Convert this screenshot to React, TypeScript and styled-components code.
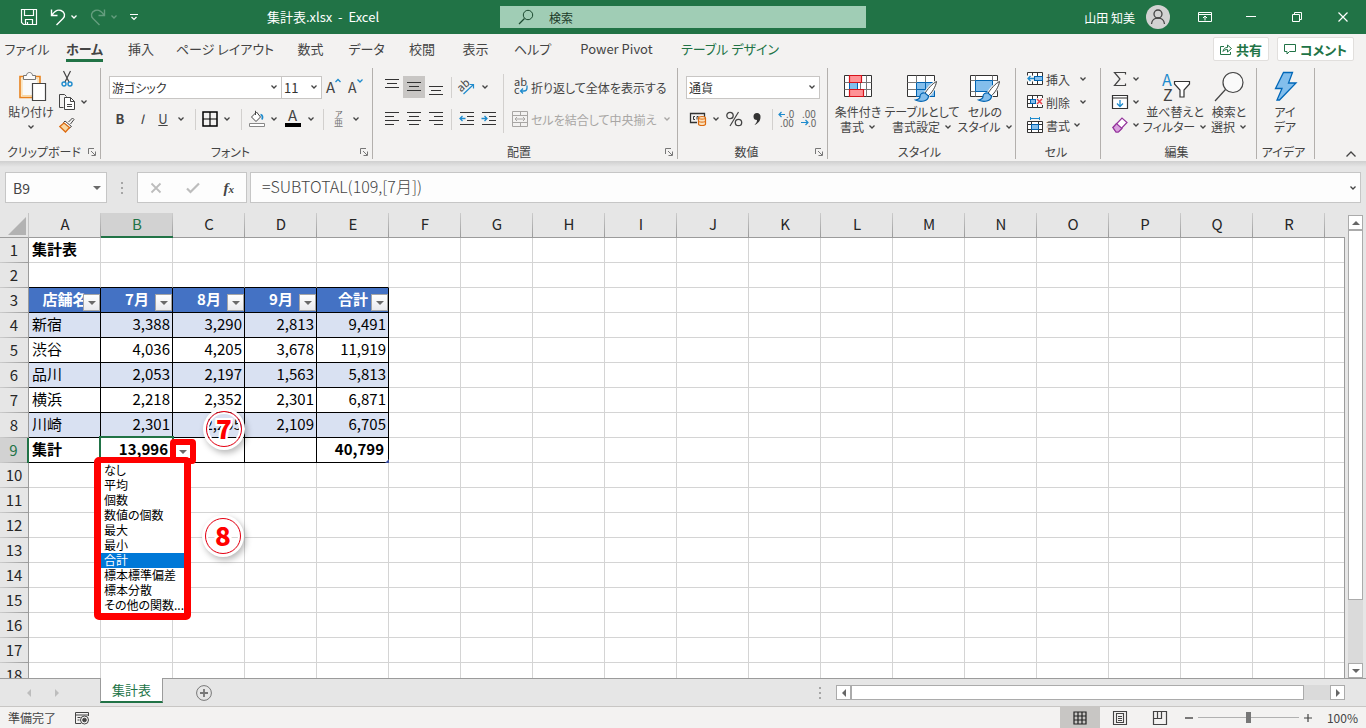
import React, { useEffect, useState } from "react";
import styled, { createGlobalStyle, css } from "styled-components";

const GREEN = "#217346";
const INK = "#444444";
const BLUE = "#1e8bcd";
const EDGE = "#9b9b9b";

const GlobalStyle = createGlobalStyle`
  * { box-sizing: border-box; }
  body { margin: 0; }
  body, button, input, select {
    font-family: "Noto Sans CJK JP", "Noto Sans", sans-serif;
    font-size: 12px;
    color: ${INK};
    font-feature-settings: "palt";
  }
  button, input, select { border: 0; padding: 0; margin: 0; background: transparent; border-radius: 0; outline: 0; }
  svg { display: block; flex: none; overflow: visible; }
`;

const Window = styled.div`
  display: flex;
  flex-direction: column;
  height: 100vh;
  overflow: hidden;
  background: #e6e6e6;
`;

/* ---------- title bar ---------- */

const TitleBar = styled.header`
  display: grid;
  grid-template-columns: 1fr minmax(0, 366px) 1fr;
  align-items: center;
  flex: none;
  height: 34px;
  background: ${GREEN};
  color: #fff;
`;

const TitleSide = styled.div`
  display: flex;
  align-items: center;
  height: 34px;
`;

const QuickAccess = styled.div`
  display: flex;
  align-items: center;
  gap: 4px;
  padding-left: 20px;
`;

const QuickButton = styled.button<{ $faded?: boolean }>`
  display: flex;
  align-items: center;
  gap: 4px;
  height: 24px;
  margin-right: 8px;
  color: #fff;
  opacity: ${(p) => (p.$faded ? 0.3 : 1)};
`;

const DocTitle = styled.h1`
  flex: 1;
  margin: 0;
  font-size: 13px;
  font-weight: 400;
  line-height: 30px;
  text-align: center;
  white-space: pre;
`;

const SearchBox = styled.label`
  display: flex;
  align-items: center;
  gap: 16px;
  height: 22px;
  padding-left: 19px;
  background: #a0cdb5;
  color: #1c4a30;
  input { flex: 1; min-width: 0; height: 22px; color: #1c3a28; }
  input::placeholder { color: #1c3a28; opacity: 1; }
`;

const UserArea = styled.button`
  display: flex;
  align-items: center;
  gap: 11px;
  margin-left: auto;
  margin-right: 12px;
  color: #fff;
  font-size: 12px;
`;

const WindowButton = styled.button`
  display: flex;
  align-items: center;
  justify-content: center;
  width: 46px;
  height: 34px;
  color: #fff;
`;

/* ---------- ribbon tabs ---------- */

const TabStrip = styled.nav`
  display: flex;
  align-items: center;
  flex: none;
  height: 30px;
  background: #f3f2f1;
  padding-right: 12px;
`;

const Tab = styled.button<{ $w: number; $active?: boolean; $context?: boolean }>`
  display: flex;
  align-items: flex-start;
  justify-content: center;
  width: ${(p) => p.$w}px;
  height: 30px;
  padding-top: 4px;
  font-size: 13px;
  white-space: nowrap;
  color: ${(p) => (p.$context ? GREEN : INK)};
  font-weight: ${(p) => (p.$active ? 700 : 400)};
  span {
    line-height: 21px;
    border-bottom: 3px solid ${(p) => (p.$active ? GREEN : "transparent")};
  }
`;

const ShareGroup = styled.div`
  display: flex;
  gap: 8px;
  margin-left: auto;
`;

const ShareButton = styled.button`
  display: flex;
  align-items: center;
  gap: 4px;
  height: 24px;
  padding: 0 6px;
  background: #fff;
  border: 1px solid #e1dfdd;
  border-radius: 2px;
  color: ${GREEN};
  font-size: 13px;
  font-weight: 700;
  white-space: nowrap;
`;

/* ---------- ribbon ---------- */

const Ribbon = styled.section`
  display: flex;
  flex: none;
  padding: 4px 8px 2px 0;
  background: #f3f2f1;
`;

const RibbonShadow = styled.div`
  flex: none;
  height: 11px;
  background: linear-gradient(#cfcfcf, #e6e6e6 6px);
`;

const Group = styled.section<{ $w: number }>`
  display: flex;
  flex-direction: column;
  flex: none;
  width: ${(p) => p.$w}px;
  height: 91px;
  border-right: 1px solid #b3b0ad;
`;

const GroupBody = styled.div<{ $pad?: number }>`
  display: flex;
  height: 77px;
  padding-left: ${(p) => p.$pad ?? 8}px;
`;

const GroupFoot = styled.footer`
  display: flex;
  align-items: center;
  height: 14px;
  padding-right: 4px;
  white-space: nowrap;
  h2 { flex: 1; margin: 0; font-size: 12px; font-weight: 400; line-height: 14px; text-align: center; }
`;

const ToolRows = styled.div`
  display: flex;
  flex-direction: column;
  gap: 10px;
  padding-top: 8px;
`;

const ToolRow = styled.div`
  display: flex;
  align-items: center;
  height: 22px;
`;

const Tool = styled.button<{ $w?: number; $on?: boolean }>`
  display: flex;
  align-items: center;
  justify-content: center;
  flex: none;
  width: ${(p) => p.$w ?? 22}px;
  height: 22px;
  font-size: 13px;
  line-height: 20px;
  background: ${(p) => (p.$on ? "#c8c6c4" : "transparent")};
`;

const ToolDivider = styled.i<{ $w?: number }>`
  display: flex;
  justify-content: center;
  flex: none;
  width: ${(p) => p.$w ?? 12}px;
  &::before { content: ""; width: 1px; height: 21px; background: #d2d0ce; }
`;

const TallDivider = styled.i`
  flex: none;
  width: 1px;
  height: 59px;
  margin: 6px 8px 0 4px;
  background: #d2d0ce;
`;

const SelectBox = styled.span<{ $w: number }>`
  display: grid;
  align-items: center;
  flex: none;
  width: ${(p) => p.$w}px;
  height: 23px;
  background: #fff;
  border: 1px solid #c8c6c4;
  & > * { grid-area: 1 / 1; }
  & > svg { justify-self: end; margin-right: 3px; pointer-events: none; }
  & + & { margin-left: -1px; }
  select { appearance: none; height: 21px; padding-left: 2px; font-size: 12px; color: #333; }
`;

const SizeSelect = styled(SelectBox)`
  select { font-size: 13px; }
`;

const StackColumn = styled.div`
  display: flex;
  flex-direction: column;
  align-items: flex-start;
  gap: 1px;
`;

const SmallButton = styled.button<{ $gap?: number; $w?: number }>`
  display: flex;
  align-items: center;
  gap: ${(p) => p.$gap ?? 3}px;
  width: ${(p) => (p.$w ? `${p.$w}px` : "auto")};
  height: 22px;
  font-size: 12px;
  white-space: nowrap;
  &:disabled { color: #a8a6a4; }
  & > svg:last-child:not(:first-child) { margin-left: auto; }
`;

const WideButton = styled(SmallButton)`
  width: 157px;
  & > svg:last-child:not(:first-child) { margin-left: 4px; }
`;

const BigButton = styled.button<{ $w: number }>`
  display: flex;
  flex-direction: column;
  align-items: center;
  flex: none;
  width: ${(p) => p.$w}px;
  height: 77px;
  padding-top: 3px;
  line-height: 15px;
  white-space: nowrap;
  & > svg { margin-bottom: 1px; }
`;

const BigLine = styled.span`
  display: flex;
  align-items: center;
  justify-content: center;
  gap: 4px;
  height: 15px;
`;

const CollapseButton = styled.button`
  align-self: flex-end;
  margin-left: auto;
  padding: 2px 1px 1px;
`;

/* ---------- formula bar ---------- */

const FormulaBar = styled.section`
  display: flex;
  align-items: center;
  flex: none;
  height: 31px;
  margin: 0 5px 10px;
`;

const BarBox = styled.div<{ $w?: number }>`
  display: flex;
  align-items: center;
  flex: ${(p) => (p.$w ? "none" : "1")};
  width: ${(p) => (p.$w ? `${p.$w}px` : "auto")};
  min-width: 0;
  height: 31px;
  padding: 0 5px;
  background: #fdfdfd;
  border: 1px solid #c6c6c6;
  input { flex: 1; min-width: 0; height: 29px; padding-left: 2px; font-size: 14px; }
`;

const FormulaBox = styled(BarBox)`
  margin-left: 3px;
  padding: 0 3px 0 9px;
  input { height: 26px; margin-bottom: 3px; font-size: 16px; font-weight: 300; font-feature-settings: normal; }
`;

const BarTools = styled(BarBox)`
  justify-content: space-around;
  padding: 0;
`;

const Grip = styled.i<{ $w: number }>`
  display: flex;
  justify-content: center;
  flex: none;
  width: ${(p) => p.$w}px;
`;

/* ---------- worksheet ---------- */

const SheetRow = styled.main`
  display: flex;
  flex: 1;
  min-height: 0;
`;

const SheetArea = styled.div`
  position: relative;
  flex: 1;
  min-width: 0;
  overflow: hidden;
  &::after {
    content: "";
    position: absolute;
    top: 24px;
    right: 0;
    bottom: 0;
    width: 1px;
    background: ${EDGE};
  }
`;

const SheetTable = styled.table`
  table-layout: fixed;
  width: 29px;
  border-collapse: separate;
  border-spacing: 0;
  background: #fff;
  font-size: 15px;
  line-height: 20px;
  color: #000;
  font-feature-settings: normal;
  td, th { padding: 0 0 2px; overflow: visible; white-space: nowrap; }
`;

const RowHeadCol = styled.col`
  width: 29px;
`;

const DataCol = styled.col`
  width: 72px;
`;

const ColumnHead = styled.th<{ $active?: boolean }>`
  height: 25px;
  font-weight: 400;
  color: ${(p) => (p.$active ? GREEN : "#262626")};
  background: linear-gradient(#cccccc, ${EDGE}) right / 1px 100% no-repeat, ${(p) => (p.$active ? "#d2d2d2" : "#e6e6e6")};
  border-bottom: ${(p) => (p.$active ? `2px solid ${GREEN}` : `1px solid ${EDGE}`)};
`;

const Corner = styled.th`
  height: 25px;
  background: #e6e6e6;
  border-right: 1px solid #c4c4c4;
  border-bottom: 1px solid ${EDGE};
  svg { margin: 4px 0 0 8px; }
`;

const RowHead = styled.th<{ $active?: boolean }>`
  height: 25px;
  font-weight: 400;
  text-align: center;
  color: ${(p) => (p.$active ? GREEN : "#262626")};
  background: linear-gradient(90deg, #cccccc, ${EDGE}) bottom / 100% 1px no-repeat, ${(p) => (p.$active ? "#d2d2d2" : "#e6e6e6")};
  border-right: ${(p) => (p.$active ? `2px solid ${GREEN}` : `1px solid ${EDGE}`)};
`;

type CellKind = "plain" | "title" | "head" | "band" | "body" | "total";

const Cell = styled.td<{ $kind: CellKind; $align?: "left" | "right"; $underlined?: boolean }>`
  position: relative;
  height: 25px;
  border-right: 1px solid #d4d4d4;
  border-bottom: 1px solid ${(p) => (p.$underlined ? "#000" : "#d4d4d4")};
  && { padding: 0 2px 2px 3px; }
  text-align: ${(p) => p.$align ?? "left"};
  ${(p) => p.$kind === "title" && css`font-weight: 700;`}
  ${(p) =>
    p.$kind === "head" &&
    css`
      background: #4472c4;
      color: #fff;
      font-weight: 700;
      text-align: center;
      border-color: #000;
    `}
  ${(p) => p.$kind === "band" && css`background: #d9e1f2; border-color: #000;`}
  ${(p) => p.$kind === "body" && css`border-color: #000;`}
  ${(p) =>
    p.$kind === "total" &&
    css`
      && { padding-right: 4px; }
      border-color: #000;
      font-weight: 700;
    `}
`;

const FilterButton = styled.button`
  position: absolute;
  right: 0;
  bottom: 1px;
  display: flex;
  align-items: center;
  justify-content: center;
  width: 17px;
  height: 17px;
  background: linear-gradient(#ffffff, #e9eaee);
  border: 1px solid #a6a6a6;
`;

const Selection = styled.i`
  position: absolute;
  top: -2px;
  left: -2px;
  right: -2px;
  bottom: -2px;
  border: 2px solid ${GREEN};
`;

const TableCorner = styled.i`
  position: absolute;
  right: -1px;
  bottom: -1px;
  border: 2px solid #3b4fa0;
  border-top-color: transparent;
  border-left-color: transparent;
`;

const DropButton = styled.button`
  position: absolute;
  z-index: 2;
  top: 1px;
  left: 69px;
  display: flex;
  align-items: center;
  justify-content: center;
  width: 26px;
  height: 25px;
  background: #fff;
  border: 6px solid #ff0000;
  border-radius: 4px;
`;

const FunctionMenu = styled.ul`
  position: absolute;
  z-index: 3;
  top: 19px;
  left: -7px;
  width: 97px;
  margin: 0;
  padding: 0;
  list-style: none;
  background: #fff;
  border: 7px solid #ff0000;
  border-top-width: 6px;
  border-radius: 5px;
  font-size: 12px;
  font-weight: 400;
  line-height: 14px;
  text-align: left;
  font-feature-settings: "palt";
`;

const MenuItem = styled.li<{ $selected?: boolean }>`
  height: 15px;
  padding-left: 3px;
  color: ${(p) => (p.$selected ? "#fff" : "#000")};
  background: ${(p) => (p.$selected ? "#0078d7" : "transparent")};
`;

const StepBadge = styled.span<{ $x: number; $y: number }>`
  position: absolute;
  z-index: 4;
  left: ${(p) => p.$x}px;
  top: ${(p) => p.$y}px;
  width: 36px;
  height: 36px;
  border: 1px solid #e60012;
  border-radius: 50%;
  box-shadow: 0 0 0 3px #fff, inset 0 0 0 2px #fff, 2px 3px 6px 3px rgba(0, 0, 0, 0.28);
  color: #ff0000;
  font-size: 26px;
  font-weight: 900;
  line-height: 32px;
  text-align: center;
  text-shadow: 2px 0 #fff, -2px 0 #fff, 0 2px #fff, 0 -2px #fff, 2px 2px #fff, -2px -2px #fff, 2px -2px #fff, -2px 2px #fff;
`;

/* ---------- scroll bars ---------- */

const VScroll = styled.div`
  display: flex;
  flex-direction: column;
  flex: none;
  width: 15px;
  margin: 2px 3px 0 3px;
  background: #dadada;
`;

const HScroll = styled.div`
  display: flex;
  flex: 0 1 509px;
  height: 15px;
  margin-right: 21px;
  background: #dadada;
`;

const ScrollButton = styled.button`
  display: flex;
  align-items: center;
  justify-content: center;
  flex: none;
  width: 15px;
  height: 15px;
  background: #fff;
  border: 1px solid #ababab;
`;

const Thumb = styled.div<{ $size: number }>`
  flex: 0 0 ${(p) => p.$size}%;
  background: #fff;
  border: 1px solid #ababab;
`;

const Track = styled.div`
  flex: 1;
`;

/* ---------- sheet tabs and status bar ---------- */

const SheetTabs = styled.nav`
  display: flex;
  align-items: center;
  flex: none;
  height: 28px;
  border-top: 1px solid ${EDGE};
`;

const SheetNav = styled.div`
  display: flex;
  align-items: center;
  gap: 20px;
  width: 100px;
  padding-left: 25px;
`;

const SheetTab = styled.button`
  align-self: flex-start;
  width: 63px;
  height: 25px;
  margin-top: -1px;
  background: #fff;
  border: 1px solid ${EDGE};
  border-top: 0;
  border-bottom: 2px solid ${GREEN};
  color: ${GREEN};
  font-size: 13px;
  line-height: 23px;
`;

const AddSheet = styled.button`
  margin: 0 auto 0 33px;
`;

const StatusBar = styled.footer`
  display: flex;
  align-items: center;
  flex: none;
  height: 22px;
  padding: 0 8px;
  background: #f3f2f1;
  border-top: 1px solid #c8c6c4;
  line-height: 20px;
  white-space: nowrap;
`;

const StatusTools = styled.div`
  display: flex;
  align-items: center;
  margin-left: auto;
`;

const ViewButton = styled.button<{ $on?: boolean }>`
  display: flex;
  align-items: center;
  justify-content: center;
  width: 40px;
  height: 21px;
  background: ${(p) => (p.$on ? "#c8c6c4" : "transparent")};
`;

const RecordButton = styled.button`
  margin-left: 18px;
`;

const ZoomButton = styled.button`
  display: flex;
  align-items: center;
  justify-content: center;
  width: 18px;
  height: 20px;
`;

const ZoomSlider = styled.input`
  appearance: none;
  width: 101px;
  height: 20px;
  background: linear-gradient(#b1b1b1, #b1b1b1) center / 100% 1px no-repeat;
  &::-webkit-slider-thumb {
    appearance: none;
    width: 5px;
    height: 11px;
    background: #777;
  }
`;

const ZoomValue = styled.output`
  width: 41px;
  text-align: right;
`;

/* ---------- icons ---------- */

type IconProps = { w: number; h: number; children: React.ReactNode; color?: string };

const Icon = ({ w, h, children, color = INK }: IconProps) => (
  <svg width={w} height={h} viewBox={`0 0 ${w} ${h}`} fill="none" stroke={color} strokeWidth="1" aria-hidden="true">
    {children}
  </svg>
);

const Chevron = ({ color = INK }: { color?: string }) => (
  <Icon w={8} h={6} color={color}>
    <path d="M1.500 1.500 4 4l2.500-2.500" strokeWidth="1.300" />
  </Icon>
);

const DownTriangle = ({ color = "#6a6a6a" }: { color?: string }) => (
  <Icon w={8} h={4} color="none">
    <path d="M0 0h8L4 4z" fill={color} />
  </Icon>
);

const Launcher = () => (
  <Icon w={8} h={8} color="#777">
    <path d="M.5 6V.5H6M3 3l4 4M7.500 3.500v4h-4" />
  </Icon>
);

const SaveIcon = () => (
  <Icon w={18} h={18} color="#fff">
    <path d="M1.500 1.500h15v15h-13l-2-2zM4.500 1.500v6h9v-6M5.500 16.500v-5h7v5M7.500 16v-2" strokeWidth="1.200" />
  </Icon>
);
const UndoIcon = () => (
  <Icon w={16} h={18} color="#fff">
    <path d="M1.500 1.500v6h6M2 7C5 2.500 8 1.500 11 2.500c4 1.500 4.500 5.500 2 8L6.500 17" strokeWidth="1.400" />
  </Icon>
);
const RedoIcon = () => (
  <Icon w={16} h={18} color="#fff">
    <path d="M14.500 1.500v6h-6M14 7C11 2.500 8 1.500 5 2.500 1 4 .5 8 3 10.500L9.500 17" strokeWidth="1.400" />
  </Icon>
);
const CustomizeIcon = () => (
  <Icon w={8} h={8} color="#fff">
    <path d="M0 1.500h8M1.500 4 4 6.500 6.500 4" strokeWidth="1.200" />
  </Icon>
);
const SearchIcon = () => (
  <Icon w={14} h={14} color="#1c4a30">
    <circle cx="9" cy="5" r="4.700" />
    <path d="M5.500 8.500 0 14" strokeWidth="1.200" />
  </Icon>
);
const AvatarIcon = () => (
  <Icon w={24} h={24} color="#444">
    <circle cx="12" cy="12" r="12" fill="#d2d2d2" stroke="none" />
    <circle cx="12" cy="9" r="4" strokeWidth="1.300" />
    <path d="M5.500 19c.5-8 12.500-8 13 0" strokeWidth="1.300" />
  </Icon>
);
const RibbonOptionsIcon = () => (
  <Icon w={14} h={12} color="#fff">
    <path d="M.5 1.500h13v9H.5zM.5 3.500h13M7 9.500v-4M5 7l2-2 2 2" />
  </Icon>
);
const MinimizeIcon = () => (
  <Icon w={10} h={10} color="#fff"><path d="M0 4.500h10" /></Icon>
);
const RestoreIcon = () => (
  <Icon w={10} h={10} color="#fff"><path d="M.5 2.500h7v7h-7zM2.500 2.500v-2h7v7h-2" /></Icon>
);
const CloseIcon = () => (
  <Icon w={10} h={10} color="#fff"><path d="M.5.5l9 9M9.500.5l-9 9" strokeWidth="1.200" /></Icon>
);
const ShareIcon = () => (
  <Icon w={12} h={12} color={GREEN}>
    <path d="M4 3.500H.5v8h10V9M3 8.500c.5-3 2-4 4.500-4V2l4 3.500-4 3.500V6.500C5.500 6.500 4 7 3 8.500z" />
  </Icon>
);
const CommentIcon = () => (
  <Icon w={12} h={12} color={GREEN}>
    <path d="M.5 1.500h11v7h-6l-2.500 2.500V8.500H.5z" />
  </Icon>
);

const PasteIcon = () => (
  <Icon w={34} h={32}>
    <g transform="translate(5 0)">
      <path d="M1 5.500h20v21H1z" fill="#fdf1dc" stroke="#e8821d" strokeWidth="1.600" />
      <path d="M3 7.500h16v17H3z" fill="#fafafa" stroke="#f8d9a4" />
      <path d="M4.500 8.500v-4h3c0-4 6-4 6 0h3v4z" fill="#fafafa" stroke="#777" />
      <path d="M13.500 12.500h13v17h-13z" fill="#fff" stroke="#444" strokeWidth="1.200" />
    </g>
  </Icon>
);
const CutIcon = () => (
  <Icon w={12} h={16}>
    <path d="M2.500 0 8 11M9.500 0 4 11" strokeWidth="1.200" />
    <circle cx="3" cy="13" r="2" stroke={BLUE} strokeWidth="1.400" />
    <circle cx="9" cy="13" r="2" stroke={BLUE} strokeWidth="1.400" />
  </Icon>
);
const CopyIcon = () => (
  <Icon w={16} h={16}>
    <path d="M4.500 13.500h-4V.5h5l2 2" />
    <path d="M5.500 3.500h6l4 4v8h-10z" fill="#fff" />
    <path d="M11.500 3.500v4h4M8 10.500h5M8 12.500h5" />
  </Icon>
);
const BrushIcon = () => (
  <Icon w={16} h={16}>
    <path d="m9.500 5 4-4L15 2.500 11.500 7" />
    <path d="m6 4 6.500 5.500-2 1.500L4.500 5.500z" fill="#fff" />
    <path d="M5 6 .8 9.500 6.500 15l4-4.500z" fill="#f8d9a4" stroke="#dd6b10" strokeWidth="1.300" />
  </Icon>
);

const letterProps = { stroke: "none", fill: INK, fontFamily: "Noto Sans CJK JP, sans-serif" } as const;

const GrowFontIcon = () => (
  <Icon w={16} h={18}>
    <text {...letterProps} x="1" y="15" fontSize="15">A</text>
    <path d="m10.500 4 2.500-2.500L15.500 4" stroke={BLUE} strokeWidth="1.300" />
  </Icon>
);
const ShrinkFontIcon = () => (
  <Icon w={16} h={18}>
    <text {...letterProps} x="1" y="15" fontSize="14">A</text>
    <path d="m10.500 1.500 2.500 2.500 2.500-2.500" stroke={BLUE} strokeWidth="1.300" />
  </Icon>
);
const BordersIcon = () => (
  <Icon w={16} h={16} color="#000">
    <path d="M1 1h14v14H1z" strokeWidth="1.500" />
    <path d="M8 1v14M1 8h14" strokeWidth="1.200" />
  </Icon>
);
const FillIcon = () => (
  <Icon w={18} h={18}>
    <path d="m3.500 7 5-5 4 5-4.500 4.500zM7.500 5V.8" fill="#fff" />
    <path d="M12.500 4.500c2 .5 2.500 2.500 1.500 5" stroke={BLUE} strokeWidth="1.800" />
    <path d="M1.500 13.500h15v3h-15z" stroke="#888" fill="#fff" />
  </Icon>
);
const FontColorIcon = () => (
  <Icon w={16} h={18}>
    <text {...letterProps} x="3" y="11" fontSize="15">A</text>
    <path d="M0 13h16v4H0z" fill="#000" stroke="none" />
  </Icon>
);
const PhoneticIcon = () => (
  <Icon w={12} h={18}>
    <text {...letterProps} x="2" y="7" fontSize="8" fill="#666">ア</text>
    <text {...letterProps} x="1" y="16" fontSize="9" fill="#777">亜</text>
  </Icon>
);

const Lines = ({ rows, top = 0 }: { rows: [number, number][]; top?: number }) => (
  <Icon w={14} h={18}>
    {rows.map(([a, b], i) => (
      <path key={i} d={`M${a} ${top + i * 4 + 0.5}H${b}`} stroke="#333" />
    ))}
  </Icon>
);
const OrientationIcon = () => (
  <Icon w={18} h={18}>
    <text {...letterProps} x="0" y="11" fontSize="11" transform="rotate(-42 6 9)">ab</text>
    <path d="m5.500 16 10-9.500M11.500 6.500H15.500V10.500" stroke={BLUE} strokeWidth="1.200" />
  </Icon>
);
const IndentIcon = ({ out }: { out?: boolean }) => (
  <Icon w={16} h={16}>
    <path d="M1 1.500h14M8 5.500h7M8 9.500h7M1 13.500h14" stroke="#333" />
    <path d={out ? "M1 7.500h5.500M3.500 5 1 7.500 3.500 10" : "M.5 7.500H6M3.500 5 6 7.500 3.500 10"} stroke={BLUE} strokeWidth="1.300" />
  </Icon>
);
const WrapIcon = () => (
  <Icon w={16} h={18}>
    <text {...letterProps} x="2" y="8" fontSize="11">ab</text>
    <text {...letterProps} x="2" y="16" fontSize="11">c</text>
    <path d="M15 7.500v2.500c0 2-1 3-3 3H9M11 10.500 8.500 13l2.500 2.500" stroke={BLUE} strokeWidth="1.300" />
  </Icon>
);
const MergeIcon = () => (
  <Icon w={16} h={16} color="#a8a6a4">
    <path d="M.5.5h15v15H.5zM.5 4.500h15M.5 11.500h15M8.500.5v4M8.500 11.500v4" />
    <path d="M3 8h10M5 6 3 8l2 2M11 6l2 2-2 2" />
  </Icon>
);
const CurrencyIcon = () => (
  <Icon w={18} h={16}>
    <path d="M8 11.500H1.500v-9h14V6" stroke="#333" strokeWidth="1.300" />
    <path d="M6 5.500H4.500v3H6M9.500 5.500H8v3" stroke="#333" />
    <path d="M9.500 7c0-2 7-2 7 0v6c0 2-7 2-7 0z" fill="#fbe3c0" stroke="#dd6b10" strokeWidth="1.200" />
    <path d="M9.500 7c0 1.500 7 1.500 7 0M9.500 10c0 1.500 7 1.500 7 0" stroke="#dd6b10" />
  </Icon>
);
const PercentIcon = () => (
  <Icon w={16} h={16}>
    <circle cx="4" cy="4.500" r="3.200" strokeWidth="1.300" />
    <circle cx="12.500" cy="11.500" r="3.200" strokeWidth="1.300" />
    <path d="M12.500 1 4 15" strokeWidth="1.200" />
  </Icon>
);
const CommaIcon = () => (
  <Icon w={10} h={14}>
    <path d="M5 1a3.500 3.500 0 0 1 3.500 4C8.500 9 6 11.500 2.500 13c1.500-1.500 2.500-3 2.500-5a3.500 3.500 0 1 1 0-7z" fill="#333" stroke="none" />
  </Icon>
);
const DecimalIcon = ({ more }: { more?: boolean }) => (
  <Icon w={18} h={18}>
    <text {...letterProps} x={more ? 8 : 2} y="8" fontSize="10" fill="#666">{more ? ".0" : ".00"}</text>
    <text {...letterProps} x={more ? 2 : 8} y="17" fontSize="10" fill="#666">{more ? ".00" : ".0"}</text>
    <path d={more ? "M1 4.500h6M3.500 2 1 4.500 3.500 7" : "M1 12.500h7M5.500 10 8 12.500 5.500 15"} stroke={BLUE} strokeWidth="1.200" />
  </Icon>
);

const ConditionalIcon = () => (
  <Icon w={32} h={32}>
    <path d="M2.500 4.500h27v21h-27z" fill="#fff" stroke="#333" />
    <path d="M2.500 11.500h27M2.500 18.500h27M7.500 4.500v21M18.500 4.500v21M24.500 4.500v21" stroke="#777" />
    <path d="M7.500 11.500h8v7h-8z" fill="#83beec" stroke="#0063b1" />
    <path d="M7.500 4.500h12v7h-12zM7.500 18.500h14v7h-14z" fill="#ff9296" stroke="#d6141c" strokeWidth="1.200" />
  </Icon>
);
const Brush = () => (
  <>
    <path d="M31.500 10.500c-4 2-9.500 8-11.500 12l3 2.500c4-3 8-10 8.500-14.500z" fill="#fff" stroke="#f3f2f1" strokeWidth="3" />
    <path d="M31.500 10.500c-4 2-9.500 8-11.500 12l3 2.500c4-3 8-10 8.500-14.500z" fill="#fff" stroke="#444" />
    <path d="M20 22c-3-.5-5 1-5 3.500 0 2-2 3-4.500 3.500 5 2.500 13 1.500 13-4z" fill="#83beec" stroke="#0063b1" strokeWidth="1.200" />
  </>
);
const TableFormatIcon = () => (
  <Icon w={34} h={32}>
    <path d="M2.500 4.500h27v21h-27z" fill="#fff" stroke="#333" />
    <path d="M11.500 11.500h18v14h-18z" fill="#83beec" stroke="#0063b1" />
    <path d="M2.500 11.500h9M2.500 18.500h9M11.500 4.500v7M20.500 4.500v7" stroke="#777" />
    <path d="M11.500 18.500h18M20.500 11.500v14" stroke="#0063b1" />
    <Brush />
  </Icon>
);
const CellStyleIcon = () => (
  <Icon w={34} h={32}>
    <path d="M2.500 4.500h27v21h-27z" fill="#fff" stroke="#333" />
    <path d="M2.500 9.500h27M2.500 20.500h27M7.500 4.500v21M24.500 4.500v21" stroke="#777" />
    <path d="M7.500 9.500h17v11h-17z" fill="#83beec" stroke="#0063b1" />
    <Brush />
  </Icon>
);
const CellGrid = () => (
  <path d="M.5 1.500h15v12H.5zM.5 5.500h15M.5 9.500h15M5.500 1.500v12M10.500 1.500v12" fill="#fff" stroke="#333" />
);
const InsertIcon = () => (
  <Icon w={16} h={16}>
    <CellGrid />
    <path d="M7.500 5.500h8v4h-8z" fill="#83beec" stroke="#0063b1" />
    <path d="M0 4.500h7v6H0z" fill="#f3f2f1" stroke="none" />
    <path d="M1 7.500h6M3.500 5 1 7.500 3.500 10" stroke={BLUE} strokeWidth="1.300" />
  </Icon>
);
const DeleteIcon = () => (
  <Icon w={16} h={16}>
    <CellGrid />
    <path d="M9 4h7v7H9z" fill="#f3f2f1" stroke="none" />
    <path d="M3.500 5.500h5v4h-5z" fill="#83beec" stroke="#0063b1" />
    <path d="m10 5 5 5M15 5l-5 5" stroke="#e8414a" strokeWidth="1.500" />
  </Icon>
);
const FormatIcon = () => (
  <Icon w={16} h={16}>
    <path d="M.5 4.500h15v11H.5zM.5 7.500h15M.5 12.500h15M4.500 4.500v11M11.500 4.500v11" fill="#fff" stroke="#333" />
    <path d="M4.500 7.500h7v5h-7z" fill="#83beec" stroke="#0063b1" />
    <path d="M3.500 0v3M12.500 0v3M3.500 1.500h9" stroke={BLUE} />
  </Icon>
);
const SumIcon = () => (
  <Icon w={16} h={16}>
    <path d="M13.500 3.500v-2h-11L8 8l-5.500 6.500h11v-2" strokeWidth="1.200" />
  </Icon>
);
const FillDownIcon = () => (
  <Icon w={16} h={16}>
    <path d="M.5 1.500h15v13H.5zM.5 4h15" fill="#fff" stroke="#333" strokeWidth="1.200" />
    <path d="M8 6v6.500M5 9.500l3 3 3-3" stroke={BLUE} strokeWidth="1.300" />
  </Icon>
);
const EraserIcon = () => (
  <Icon w={16} h={16} color="#94349c">
    <path d="m1 10.500 9-9.500 5 4.500-9 9.500H4z" fill="#fff" strokeWidth="1.200" />
    <path d="m1 10.500 3.500-4 5.500 5L6.500 15H4z" fill="#d9a0de" strokeWidth="1.200" />
  </Icon>
);
const SortIcon = () => (
  <Icon w={32} h={32}>
    <text {...letterProps} x="3" y="15" fontSize="16" fill={BLUE}>A</text>
    <text {...letterProps} x="4" y="30" fontSize="16">Z</text>
    <path d="M15.500 10.500h15v2.500l-5.500 6v7h-4v-7l-5.500-6z" fill="#fff" stroke="#333" strokeWidth="1.200" />
  </Icon>
);
const FindIcon = () => (
  <Icon w={32} h={32}>
    <circle cx="20" cy="11.500" r="10" fill="#fafafa" strokeWidth="1.200" />
    <path d="M12.500 18.500 2 30" strokeWidth="1.200" />
  </Icon>
);
const IdeaIcon = () => (
  <Icon w={24} h={32}>
    <path d="M10.500 1.500h9l-4 10.500h7.500L6.500 29H4l5-11.500H2.500z" fill="#83beec" stroke="#0067b8" strokeWidth="1.300" />
  </Icon>
);
const ChevronUp = () => (
  <Icon w={12} h={8}><path d="M1.500 6.500 6 2l4.500 4.500" strokeWidth="1.300" /></Icon>
);

const Dots = () => (
  <Icon w={4} h={12} color="none">
    <path d="M1 0h2v2H1zM1 5h2v2H1zM1 10h2v2H1z" fill="#a6a6a6" />
  </Icon>
);
const CancelIcon = () => (
  <Icon w={12} h={12} color="#bdbdbd"><path d="m1.500 1.500 9 9M10.500 1.500l-9 9" strokeWidth="1.800" /></Icon>
);
const CheckIcon = () => (
  <Icon w={14} h={12} color="#bdbdbd"><path d="m1 6.500 3.500 3.500L13 1.500" strokeWidth="2.200" /></Icon>
);
const FxLabel = styled.i`
  font-family: "Liberation Serif", serif;
  font-size: 15px;
  font-weight: 700;
  small { font-size: 11px; }
`;

const Arrow = ({ dir, color = "#666" }: { dir: "up" | "down" | "left" | "right"; color?: string }) => {
  const shape = { up: "M0 6h8L4 2z", down: "M0 2h8L4 6z", left: "M6 0v8L2 4z", right: "M2 0v8l4-4z" }[dir];
  return <Icon w={8} h={8} color="none"><path d={shape} fill={color} /></Icon>;
};
const AddIcon = () => (
  <Icon w={16} h={16} color="#777">
    <circle cx="8" cy="8" r="7.400" />
    <path d="M8 4v8M4 8h8" strokeWidth="1.800" />
  </Icon>
);
const RecordIcon = () => (
  <Icon w={16} h={14}>
    <path d="M7 12.500H1.500v-11h13V5M1.500 4h13M3.500 6.500h3M3.500 9h2" />
    <circle cx="10.500" cy="9" r="4" />
    <circle cx="10.500" cy="9" r="1.800" fill={INK} />
  </Icon>
);
const NormalViewIcon = () => (
  <Icon w={14} h={14} color="#222">
    <path d="M1 1h12v12H1zM5 1v12M9 1v12M1 5h12M1 9h12" strokeWidth="1.200" />
  </Icon>
);
const PageViewIcon = () => (
  <Icon w={14} h={14}>
    <path d="M.5.5h13v13H.5zM3.500 2.500h7v9h-7zM5 5.500h4M5 7.500h4M5 9.500h4" strokeWidth="1.100" />
  </Icon>
);
const BreakViewIcon = () => (
  <Icon w={14} h={14}>
    <path d="M.5.5h13v13H.5zM.5 7.500h8v-7M4.500.5v7" strokeWidth="1.200" />
  </Icon>
);

/* ---------- data ---------- */

const tabs: { label: string; w: number; active?: boolean; context?: boolean }[] = [
  { label: "ファイル", w: 54 },
  { label: "ホーム", w: 61, active: true },
  { label: "挿入", w: 52 },
  { label: "ページ レイアウト", w: 116 },
  { label: "数式", w: 55 },
  { label: "データ", w: 57 },
  { label: "校閲", w: 54 },
  { label: "表示", w: 53 },
  { label: "ヘルプ", w: 61 },
  { label: "Power Pivot", w: 107 },
  { label: "テーブル デザイン", w: 120, context: true },
];

const letters = "ABCDEFGHIJKLMNOPQRSTUVWXYZ".split("");

const sheet: Record<number, string[]> = {
  1: ["集計表"],
  3: ["店舗名", "7月", "8月", "9月", "合計"],
  4: ["新宿", "3,388", "3,290", "2,813", "9,491"],
  5: ["渋谷", "4,036", "4,205", "3,678", "11,919"],
  6: ["品川", "2,053", "2,197", "1,563", "5,813"],
  7: ["横浜", "2,218", "2,352", "2,301", "6,871"],
  8: ["川崎", "2,301", "2,295", "2,109", "6,705"],
  9: ["集計", "13,996", "", "", "40,799"],
};

const functions = ["なし", "平均", "個数", "数値の個数", "最大", "最小", "合計", "標本標準偏差", "標本分散", "その他の関数..."];

const kindOf = (row: number, col: number): CellKind => {
  if (row === 1) return "title";
  if (col > 4 || row < 3 || row > 9) return "plain";
  if (row === 3) return "head";
  if (row === 9) return "total";
  return row % 2 === 0 ? "band" : "body";
};

/* Number of rows and columns needed to fill the window, the last one of each partly visible. */
const measureGrid = () => ({
  rows: Math.max(9, Math.ceil((window.innerHeight - 288) / 25)),
  cols: Math.min(26, Math.max(5, Math.ceil((window.innerWidth - 51) / 72))),
});

const useGridSize = () => {
  const [size, setSize] = useState(measureGrid);
  useEffect(() => {
    const update = () => setSize(measureGrid());
    window.addEventListener("resize", update);
    return () => window.removeEventListener("resize", update);
  }, []);
  return size;
};

/* ---------- parts ---------- */

const RibbonGroup = ({ title, w, pad, launcher, children }: {
  title: string; w: number; pad?: number; launcher?: boolean; children: React.ReactNode;
}) => (
  <Group $w={w} aria-label={title}>
    <GroupBody $pad={pad}>{children}</GroupBody>
    <GroupFoot>
      <h2>{title}</h2>
      {launcher && <button aria-label={`${title}の設定`}><Launcher /></button>}
    </GroupFoot>
  </Group>
);

const Big = ({ icon, lines, w, menu }: { icon: React.ReactNode; lines: string[]; w: number; menu?: boolean }) => (
  <BigButton $w={w}>
    {icon}
    {lines.map((line, i) => (
      <BigLine key={i}>
        {line}
        {menu && i === lines.length - 1 && <Chevron />}
      </BigLine>
    ))}
  </BigButton>
);

const Drop = ({ label, w = 12 }: { label: string; w?: number }) => (
  <Tool $w={w} aria-label={label}><Chevron /></Tool>
);

const Worksheet = () => {
  const { rows, cols } = useGridSize();
  const columns = letters.slice(0, cols);
  return (
    <SheetArea>
      <SheetTable>
        <colgroup>
          <RowHeadCol />
          {columns.map((c) => <DataCol key={c} />)}
        </colgroup>
        <thead>
          <tr>
            <Corner aria-label="すべて選択">
              <Icon w={18} h={18} color="none"><path d="M18 0v18H0z" fill="#b2b2b2" /></Icon>
            </Corner>
            {columns.map((c) => <ColumnHead key={c} scope="col" $active={c === "B"}>{c}</ColumnHead>)}
          </tr>
        </thead>
        <tbody>
          {Array.from({ length: rows }, (_, i) => i + 1).map((row) => (
            <tr key={row}>
              <RowHead scope="row" $active={row === 9}>{row}</RowHead>
              {columns.map((c, col) => (
                <Cell
                  key={c}
                  $kind={kindOf(row, col)}
                  $align={col > 0 ? "right" : "left"}
                  $underlined={row === 2 && col < 5}
                >
                  {sheet[row]?.[col]}
                  {row === 3 && col < 5 && (
                    <FilterButton aria-label={`${sheet[3][col]}のフィルター`}><DownTriangle /></FilterButton>
                  )}
                  {row === 9 && col === 1 && (
                    <>
                      <Selection />
                      <DropButton aria-label="集計方法"><DownTriangle /></DropButton>
                      <FunctionMenu role="listbox" aria-label="集計方法">
                        {functions.map((f) => (
                          <MenuItem key={f} role="option" aria-selected={f === "合計"} $selected={f === "合計"}>{f}</MenuItem>
                        ))}
                      </FunctionMenu>
                    </>
                  )}
                  {row === 9 && col === 4 && <TableCorner />}
                </Cell>
              ))}
            </tr>
          ))}
        </tbody>
      </SheetTable>
      <StepBadge $x={206} $y={198}>7</StepBadge>
      <StepBadge $x={205} $y={305}>8</StepBadge>
    </SheetArea>
  );
};

export default function App() {
  return (
    <Window>
      <GlobalStyle />
      <TitleBar>
        <TitleSide>
          <QuickAccess>
            <QuickButton aria-label="上書き保存"><SaveIcon /></QuickButton>
            <QuickButton aria-label="元に戻す"><UndoIcon /><Chevron color="#fff" /></QuickButton>
            <QuickButton aria-label="やり直し" $faded><RedoIcon /><Chevron color="#fff" /></QuickButton>
            <QuickButton aria-label="クイック アクセス ツール バーのユーザー設定"><CustomizeIcon /></QuickButton>
          </QuickAccess>
          <DocTitle>{"集計表.xlsx  -  Excel"}</DocTitle>
        </TitleSide>
        <SearchBox>
          <SearchIcon />
          <input type="search" placeholder="検索" aria-label="検索" />
        </SearchBox>
        <TitleSide>
          <UserArea>山田 知美<AvatarIcon /></UserArea>
          <WindowButton aria-label="リボンの表示オプション"><RibbonOptionsIcon /></WindowButton>
          <WindowButton aria-label="最小化"><MinimizeIcon /></WindowButton>
          <WindowButton aria-label="元に戻す (縮小)"><RestoreIcon /></WindowButton>
          <WindowButton aria-label="閉じる"><CloseIcon /></WindowButton>
        </TitleSide>
      </TitleBar>

      <TabStrip>
        {tabs.map((t) => (
          <Tab key={t.label} $w={t.w} $active={t.active} $context={t.context}><span>{t.label}</span></Tab>
        ))}
        <ShareGroup>
          <ShareButton><ShareIcon />共有</ShareButton>
          <ShareButton><CommentIcon />コメント</ShareButton>
        </ShareGroup>
      </TabStrip>

      <Ribbon>
        <RibbonGroup title="クリップボード" w={101} pad={6} launcher>
          <BigButton $w={50}>
            <PasteIcon />
            <BigLine>貼り付け</BigLine>
            <BigLine><Chevron /></BigLine>
          </BigButton>
          <StackColumn>
            <SmallButton $gap={2} aria-label="切り取り"><Tool as="span"><CutIcon /></Tool></SmallButton>
            <SmallButton $gap={2} aria-label="コピー"><Tool as="span"><CopyIcon /></Tool><Chevron /></SmallButton>
            <SmallButton $gap={2} aria-label="書式のコピー/貼り付け"><Tool as="span"><BrushIcon /></Tool></SmallButton>
          </StackColumn>
        </RibbonGroup>

        <RibbonGroup title="フォント" w={272} launcher>
          <ToolRows>
            <ToolRow>
              <SelectBox $w={173}>
                <select aria-label="フォント"><option>游ゴシック</option></select>
                <Chevron />
              </SelectBox>
              <SizeSelect $w={41}>
                <select aria-label="フォント サイズ"><option>11</option></select>
                <Chevron />
              </SizeSelect>
              <Tool aria-label="フォント サイズの拡大"><GrowFontIcon /></Tool>
              <Tool aria-label="フォント サイズの縮小"><ShrinkFontIcon /></Tool>
            </ToolRow>
            <ToolRow>
              <Tool aria-label="太字"><b>B</b></Tool>
              <Tool aria-label="斜体"><i>I</i></Tool>
              <Tool $w={20} aria-label="下線"><u>U</u></Tool>
              <Drop label="下線の種類" w={16} />
              <ToolDivider />
              <Tool $w={18} aria-label="罫線"><BordersIcon /></Tool>
              <Drop label="罫線の種類" w={16} />
              <ToolDivider />
              <Tool $w={20} aria-label="塗りつぶしの色"><FillIcon /></Tool>
              <Drop label="塗りつぶしの色の選択" w={14} />
              <Tool $w={24} aria-label="フォントの色"><FontColorIcon /></Tool>
              <Drop label="フォントの色の選択" />
              <ToolDivider />
              <Tool $w={20} aria-label="ふりがなの表示"><PhoneticIcon /></Tool>
              <Drop label="ふりがなの設定" w={14} />
            </ToolRow>
          </ToolRows>
        </RibbonGroup>

        <RibbonGroup title="配置" w={305} launcher>
          <ToolRows>
            <ToolRow>
              <Tool aria-label="上揃え"><Lines top={1} rows={[[0, 14], [2, 12], [0, 14]]} /></Tool>
              <Tool $on aria-label="上下中央揃え"><Lines top={4} rows={[[0, 14], [2, 12], [0, 14]]} /></Tool>
              <Tool aria-label="下揃え"><Lines top={8} rows={[[0, 14], [2, 12], [0, 14]]} /></Tool>
              <ToolDivider $w={8} />
              <Tool $w={24} aria-label="方向"><OrientationIcon /></Tool>
              <Drop label="方向の選択" />
            </ToolRow>
            <ToolRow>
              <Tool aria-label="左揃え"><Lines top={2} rows={[[0, 14], [0, 9], [0, 14], [0, 9]]} /></Tool>
              <Tool aria-label="中央揃え"><Lines top={2} rows={[[0, 14], [2, 12], [0, 14], [2, 12]]} /></Tool>
              <Tool aria-label="右揃え"><Lines top={2} rows={[[0, 14], [5, 14], [0, 14], [5, 14]]} /></Tool>
              <ToolDivider $w={8} />
              <Tool $w={24} aria-label="インデントを減らす"><IndentIcon out /></Tool>
              <Tool $w={20} aria-label="インデントを増やす"><IndentIcon /></Tool>
            </ToolRow>
          </ToolRows>
          <TallDivider />
          <ToolRows>
            <WideButton><WrapIcon />折り返して全体を表示する</WideButton>
            <WideButton disabled><MergeIcon />セルを結合して中央揃え<Chevron color="#a8a6a4" /></WideButton>
          </ToolRows>
        </RibbonGroup>

        <RibbonGroup title="数値" w={150} launcher>
          <ToolRows>
            <ToolRow>
              <SelectBox $w={134}>
                <select aria-label="表示形式"><option>通貨</option></select>
                <Chevron />
              </SelectBox>
            </ToolRow>
            <ToolRow>
              <Tool $w={24} aria-label="通貨表示形式"><CurrencyIcon /></Tool>
              <Drop label="通貨の選択" />
              <Tool $w={24} aria-label="パーセント スタイル"><PercentIcon /></Tool>
              <Tool aria-label="桁区切りスタイル"><CommaIcon /></Tool>
              <ToolDivider $w={8} />
              <Tool aria-label="小数点以下の表示桁数を増やす"><DecimalIcon more /></Tool>
              <Tool aria-label="小数点以下の表示桁数を減らす"><DecimalIcon /></Tool>
            </ToolRow>
          </ToolRows>
        </RibbonGroup>

        <RibbonGroup title="スタイル" w={188} pad={3}>
          <Big icon={<ConditionalIcon />} lines={["条件付き", "書式"]} w={54} menu />
          <Big icon={<TableFormatIcon />} lines={["テーブルとして", "書式設定"]} w={74} menu />
          <Big icon={<CellStyleIcon />} lines={["セルの", "スタイル"]} w={52} menu />
        </RibbonGroup>

        <RibbonGroup title="セル" w={85} pad={11}>
          <StackColumn>
            <SmallButton $w={60}><InsertIcon />挿入<Chevron /></SmallButton>
            <SmallButton $w={60}><DeleteIcon />削除<Chevron /></SmallButton>
            <SmallButton><FormatIcon />書式<Chevron /></SmallButton>
          </StackColumn>
        </RibbonGroup>

        <RibbonGroup title="編集" w={156} pad={11}>
          <StackColumn>
            <SmallButton $gap={4} aria-label="オート SUM"><SumIcon /><Chevron /></SmallButton>
            <SmallButton $gap={4} aria-label="フィル"><FillDownIcon /><Chevron /></SmallButton>
            <SmallButton $gap={4} aria-label="クリア"><EraserIcon /><Chevron /></SmallButton>
          </StackColumn>
          <Big icon={<SortIcon />} lines={["並べ替えと", "フィルター"]} w={70} menu />
          <Big icon={<FindIcon />} lines={["検索と", "選択"]} w={38} menu />
        </RibbonGroup>

        <RibbonGroup title="アイデア" w={58} pad={8}>
          <Big icon={<IdeaIcon />} lines={["アイ", "デア"]} w={40} />
        </RibbonGroup>
        <CollapseButton aria-label="リボンを折りたたむ"><ChevronUp /></CollapseButton>
      </Ribbon>
      <RibbonShadow />

      <FormulaBar>
        <BarBox $w={102}>
          <input aria-label="名前ボックス" defaultValue="B9" />
          <button aria-label="名前の一覧"><DownTriangle /></button>
        </BarBox>
        <Grip $w={30}><Dots /></Grip>
        <BarTools $w={110}>
          <button aria-label="キャンセル"><CancelIcon /></button>
          <button aria-label="入力"><CheckIcon /></button>
          <button aria-label="関数の挿入"><FxLabel>f<small>x</small></FxLabel></button>
        </BarTools>
        <FormulaBox>
          <input aria-label="数式バー" defaultValue="=SUBTOTAL(109,[7月])" />
          <button aria-label="数式バーの展開"><Chevron /></button>
        </FormulaBox>
      </FormulaBar>

      <SheetRow>
        <Worksheet />
        <VScroll>
          <ScrollButton aria-label="上へ"><Arrow dir="up" /></ScrollButton>
          <Thumb $size={80} />
          <Track />
          <ScrollButton aria-label="下へ"><Arrow dir="down" /></ScrollButton>
        </VScroll>
      </SheetRow>

      <SheetTabs>
        <SheetNav>
          <button aria-label="前のシート"><Arrow dir="left" color="#bdbdbd" /></button>
          <button aria-label="次のシート"><Arrow dir="right" color="#bdbdbd" /></button>
        </SheetNav>
        <SheetTab>集計表</SheetTab>
        <AddSheet aria-label="新しいシート"><AddIcon /></AddSheet>
        <Grip $w={32}><Dots /></Grip>
        <HScroll>
          <ScrollButton aria-label="左へ"><Arrow dir="left" /></ScrollButton>
          <Thumb $size={89} />
          <Track />
          <ScrollButton aria-label="右へ"><Arrow dir="right" /></ScrollButton>
        </HScroll>
      </SheetTabs>

      <StatusBar>
        準備完了
        <RecordButton aria-label="マクロの記録"><RecordIcon /></RecordButton>
        <StatusTools>
          <ViewButton $on aria-label="標準"><NormalViewIcon /></ViewButton>
          <ViewButton aria-label="ページ レイアウト"><PageViewIcon /></ViewButton>
          <ViewButton aria-label="改ページ プレビュー"><BreakViewIcon /></ViewButton>
          <ZoomButton aria-label="縮小"><Icon w={10} h={10}><path d="M1 5h8" strokeWidth="1.400" /></Icon></ZoomButton>
          <ZoomSlider type="range" aria-label="ズーム" min={0} max={200} defaultValue={100} />
          <ZoomButton aria-label="拡大"><Icon w={10} h={10}><path d="M1 5h8M5 1v8" strokeWidth="1.200" /></Icon></ZoomButton>
          <ZoomValue>100%</ZoomValue>
        </StatusTools>
      </StatusBar>
    </Window>
  );
}
